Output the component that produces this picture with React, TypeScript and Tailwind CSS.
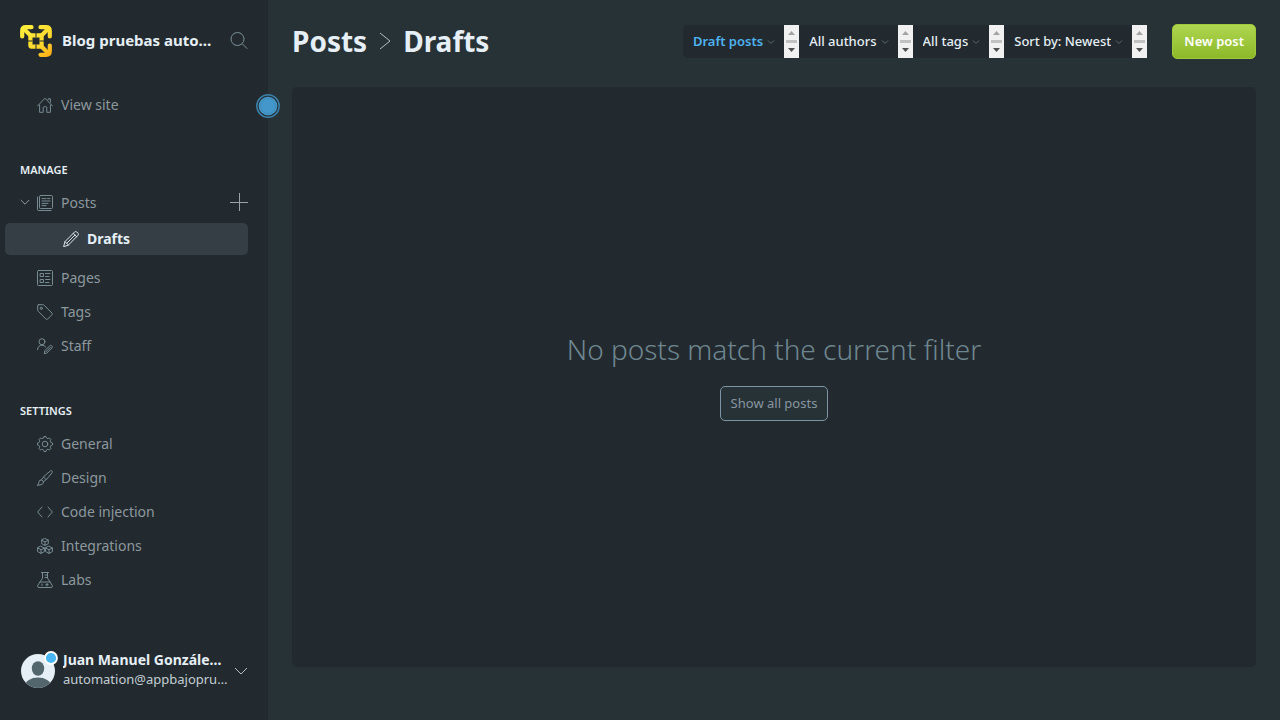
import type { ReactNode } from 'react';

const icons: Record<string, ReactNode> = {
  home: (
    <path d="M.5 9 8 1.2 15.5 9M2.6 8v7.3h3.6v-4.6q0-1 1-1h1.6q1 0 1 1v4.6h3.6V8M11.2 2.6V1.8h2.2v3.4" />
  ),
  posts: (
    <>
      <rect x="2.5" y=".5" width="13" height="13" rx="1" />
      <path d="M.5 2v12.5q0 1 1 1H14M5 3.6h4M10.5 3.6H13M5 6h8M5 8.4h6M5 10.6h4" />
    </>
  ),
  pencil: (
    <path d="M.7 15.3 2 10.6 11.7.9q1-.8 2 0l1.4 1.4q.8 1 0 2L5.4 14ZM2 10.6 5.4 14M10.2 2.4l3.4 3.4M3.8 12.2 12 4" />
  ),
  pages: (
    <>
      <rect x=".5" y=".5" width="15" height="15" rx="1" />
      <path d="M3.5 3.5h3v3h-3ZM3.5 9.5h3v3h-3ZM8.5 3.5H13M8.5 6.5H12M8.5 9.5H13M8.5 12.5H12" />
    </>
  ),
  tag: (
    <>
      <path d="M1.5.7h4.3q.8 0 1.4.6l7.8 7.8q.8.8 0 1.6l-4.4 4.4q-.8.8-1.6 0L1.3 7.4Q.7 6.8.7 6V1.5q0-.8.8-.8Z" />
      <circle cx="4.3" cy="4.3" r="1.1" />
    </>
  ),
  staff: (
    <>
      <circle cx="5" cy="3.7" r="3" />
      <path d="M.5 11.7Q1 7.2 5 7.2q2.3 0 3.6 1.7M7.3 15.4l.6-2.8 5-5q.8-.6 1.6 0l.6.6q.6.8 0 1.6l-5 5ZM9 13.8l4.5-4.5" />
    </>
  ),
  gear: (
    <>
      <circle cx="8" cy="8" r="2.8" />
      <path d="m6.6 1.7.4-1.200h2l.4 1.200q.5 1.300 1.800.8l1.200-.5 1.500 1.500-.6 1.200q-.5 1.300.8 1.800l1.400.5v2l-1.400.5q-1.300.5-.8 1.800l.6 1.200-1.500 1.500-1.200-.6q-1.300-.5-1.800.8L9 15.500H7l-.5-1.300q-.5-1.300-1.800-.8l-1.200.6L2 12.500l.6-1.200Q3.100 10 1.800 9.500L.5 9V7l1.300-.5q1.300-.5.8-1.800L2 3.500 3.500 2l1.200.5q1.400.5 1.900-.8Z" />
    </>
  ),
  brush: (
    <path d="M.7 15.2Q1.7 14 1.8 12.4 2 10 4.2 9.9q2.2.3 2.2 2.4-.1 2.8-5.7 2.9ZM4.2 9.9Q8 4.5 13.5.9q1-.6 1.6.1.7.7 0 1.7Q11.500 8 6.400 12.100M6.500 7l2.700 2.700" />
  ),
  code: <path d="M5 3 .6 8 5 13M11 3l4.400 5L11 13" />,
  cubes: (
    <path d="m8 .5 3.300 1.700v3.500L8 7.400 4.700 5.700V2.200ZM4.700 2.200 8 3.900l3.300-1.700M8 3.900v3.500M4 8.300l3.400 1.700v3.600L4 15.400.6 13.600V10ZM.6 10 4 11.700 7.400 10M4 11.700v3.700M12 8.300l3.400 1.700v3.600L12 15.400l-3.400-1.800V10ZM8.600 10l3.400 1.700 3.400-1.700M12 11.700v3.700" />
  ),
  flask: (
    <path d="M4.500.5h7M5.500.5v5.700L.8 13.300q-.8 2.200 1.200 2.200h12q2 0 1.200-2.200l-4.700-7.100V.5M3 10h10M8 3h2.500M8 5.500h2.500M5 12v1.500M10 11.500v2.400M8.800 12.700h2.400" />
  ),
};

function Icon({ name, className = 'text-[#7c9099]' }: { name: string; className?: string }) {
  return (
    <svg
      viewBox="0 0 16 16"
      className={`mt-[2px] size-4 shrink-0 ${className}`}
      fill="none"
      stroke="currentColor"
      strokeWidth="0.95"
      strokeLinejoin="round"
      strokeLinecap="round"
      aria-hidden="true"
    >
      {icons[name]}
    </svg>
  );
}

function NavItem({ icon, label }: { icon: string; label: string }) {
  return (
    <a href="#" className="flex h-[34px] items-center gap-2 pl-[37px] text-[14px] text-[#8d989e]">
      <Icon name={icon} />
      {label}
    </a>
  );
}

function SectionTitle({ children }: { children: ReactNode }) {
  return (
    <h2 className="mt-[39px] mb-[5px] h-5 pl-5 text-[11px] leading-5 font-semibold text-[#e5eff5]">
      {children}
    </h2>
  );
}

function Logo() {
  return (
    <svg viewBox="0 0 32 32" className="size-8 shrink-0" fill="none" aria-hidden="true">
      <defs>
        <linearGradient id="gold" x1="4" y1="2" x2="30" y2="31" gradientUnits="userSpaceOnUse">
          <stop stopColor="#ffee3a" />
          <stop offset="0.6" stopColor="#fbd92f" />
          <stop offset="1" stopColor="#ffae16" />
        </linearGradient>
      </defs>
      <g stroke="url(#gold)" strokeWidth="4.200" strokeLinecap="round" strokeLinejoin="round">
        <path d="M2.200 11.500V6q0-3.800 3.800-3.800h5.500M20.500 2.200H26q3.800 0 3.800 3.800v5.500M29.800 20.500V26q0 3.800-3.800 3.800h-5.500" />
        <path d="m4.500 4.500 6 6M27.500 4.500l-6 6M27.500 27.500l-6-6" />
        <rect x="10.400" y="10.400" width="11.200" height="11.200" rx="1" />
      </g>
      <path d="M16 7.500v5M16 19.500v5M7.500 16h5M19.500 16h5" stroke="#222a2f" strokeWidth="1" />
    </svg>
  );
}

function ScrollStub() {
  return (
    <svg width="15" height="33" viewBox="0 0 15 33" className="shrink-0" aria-hidden="true">
      <path fill="#f1f1f1" d="M0 0h15v33H0z" />
      <path fill="#a3a3a3" d="M4 10h7L7.500 6z" />
      <path fill="#c1c1c1" d="M2 15h11v3H2z" />
      <path fill="#505050" d="M4 23h7l-3.500 4z" />
    </svg>
  );
}

function Filter({ label, options, active }: { label: string; options: string[]; active?: boolean }) {
  return (
    <div className="flex h-[33px] bg-[#222a2f] first:rounded-l-[5px]">
      <label className="flex items-center gap-1 pr-[9px] pl-[10px]">
        <select
          aria-label={label}
          className={`h-[33px] appearance-none bg-transparent text-[13px] [field-sizing:content] ${
            active ? 'font-semibold text-[#4fb3f0]' : 'font-medium text-[#e5eff5]'
          }`}
        >
          {options.map((option) => (
            <option key={option}>{option}</option>
          ))}
        </select>
        <svg viewBox="0 0 8 8" className="size-2 shrink-0" fill="none" stroke="#5b6a71" aria-hidden="true">
          <path d="m1 2.500 3 3 3-3" />
        </svg>
      </label>
      <ScrollStub />
    </div>
  );
}

export default function App() {
  return (
    <div className="flex min-h-screen bg-[#273237] font-['Noto_Sans','Open_Sans',sans-serif]">
      <aside className="relative flex w-[268px] shrink-0 flex-col bg-[#222a2f] pt-6 pb-8">
        <div className="flex h-[33px] items-center pr-5 pl-5">
          <Logo />
          <div className="ml-[10px] w-[152px] truncate text-[15px] font-bold text-[#e5eff5]">
            Blog pruebas automation
          </div>
          <button type="button" aria-label="Search" className="ml-auto">
            <svg viewBox="0 0 18 18" className="size-[18px]" fill="none" stroke="#7c9099" aria-hidden="true">
              <circle cx="7.500" cy="7" r="6.500" />
              <path d="m12.200 11.700 5 5" />
            </svg>
          </button>
        </div>

        <nav className="mt-[30px]" aria-label="Main">
          <NavItem icon="home" label="View site" />
          <SectionTitle>MANAGE</SectionTitle>
          <div className="flex h-[34px] items-center pr-5 pl-5 text-[14px] text-[#8d989e]">
            <button type="button" aria-label="Collapse posts" className="mr-[7px]">
              <svg viewBox="0 0 10 10" className="size-[10px]" fill="none" stroke="#8d9ba2" aria-hidden="true">
                <path d="m.8 3 4.200 4.200L9.200 3" />
              </svg>
            </button>
            <a href="#" className="flex items-center gap-2">
              <Icon name="posts" />
              Posts
            </a>
            <a href="#" aria-label="New post" className="ml-auto">
              <svg viewBox="0 0 18 18" className="size-[18px]" stroke="#9ba3a7" strokeWidth="1" aria-hidden="true">
                <path d="M9.500 0v18M0 9.500h18" />
              </svg>
            </a>
          </div>
          <a
            href="#"
            className="mt-1 mr-5 mb-[5px] ml-[5px] flex h-8 items-center gap-2 rounded-[5px] bg-[#343e44] pb-[2px] pl-[58px] text-[14px] font-bold text-[#e5eff5]"
          >
            <Icon name="pencil" className="text-[#e5eff5]" />
            Drafts
          </a>
          <NavItem icon="pages" label="Pages" />
          <NavItem icon="tag" label="Tags" />
          <NavItem icon="staff" label="Staff" />
          <SectionTitle>SETTINGS</SectionTitle>
          <NavItem icon="gear" label="General" />
          <NavItem icon="brush" label="Design" />
          <NavItem icon="code" label="Code injection" />
          <NavItem icon="cubes" label="Integrations" />
          <NavItem icon="flask" label="Labs" />
        </nav>

        <button type="button" className="mt-auto flex items-end pr-5 pl-5 text-left">
          <svg viewBox="0 0 39 39" className="size-[39px] shrink-0" aria-hidden="true">
            <defs>
              <clipPath id="face">
                <circle cx="18" cy="22" r="17" />
              </clipPath>
            </defs>
            <circle cx="18" cy="22" r="17" fill="#e5eff5" />
            <g clipPath="url(#face)" fill="#54666d">
              <ellipse cx="18" cy="19.500" rx="6.200" ry="7.300" />
              <ellipse cx="18" cy="37" rx="13" ry="8.500" />
            </g>
            <circle cx="31" cy="9" r="6" fill="#4ab5f3" stroke="#fff" strokeWidth="1.800" />
          </svg>
          <span className="-mb-px ml-1 block w-[168px] shrink-0">
            <span className="block max-w-[162px] truncate text-[14px] leading-5 font-bold text-[#e5eff5]">
              Juan Manuel González Garzón
            </span>
            <span className="block truncate text-[13px] leading-[19px] text-[#c3ced4]">
              automation@appbajopruebas.com
            </span>
          </span>
          <svg viewBox="0 0 14 14" className="mb-[10px] ml-auto size-[14px] shrink-0" fill="none" stroke="#b3bdc2" aria-hidden="true">
            <path d="m1 4 6 6 6-6" />
          </svg>
        </button>

        <button type="button" aria-label="Collapse sidebar" className="absolute top-[94px] -right-3 size-6">
          <svg viewBox="0 0 24 24" className="size-6" aria-hidden="true">
            <circle cx="12" cy="12" r="11.200" fill="#25333b" stroke="#3b7fa8" strokeWidth="1.500" />
            <circle cx="12" cy="12" r="9.300" fill="#4497ca" />
            <circle cx="12" cy="12" r="7.500" fill="none" stroke="#3d87b5" strokeWidth=".7" />
          </svg>
        </button>
      </aside>

      <main className="flex min-w-0 flex-1 flex-col px-6 pt-6 pb-[53px]">
        <header className="flex h-[35px] items-center justify-between">
          <h1 className="flex items-center pb-[2px] text-[28px] leading-8 font-bold text-[#e5eff5]">
            <a href="#">Posts</a>
            <svg viewBox="0 0 12 18" className="mx-3 h-[18px] w-3" fill="none" stroke="#b3bdc2" aria-hidden="true">
              <path d="m1 1 10 8-10 8" />
            </svg>
            Drafts
          </h1>
          <div className="flex items-center gap-[25px]">
            <div className="flex">
              <Filter label="Post type" options={['Draft posts', 'All posts', 'Published posts']} active />
              <Filter label="Author" options={['All authors']} />
              <Filter label="Tag" options={['All tags']} />
              <Filter label="Order" options={['Sort by: Newest', 'Sort by: Oldest']} />
            </div>
            <a
              href="#"
              className="flex h-[35px] items-center rounded-[5px] border border-[#9fcb3a] bg-linear-to-b from-[#aed64f] to-[#8db928] px-[11px] text-[13px] font-semibold text-white"
            >
              New post
            </a>
          </div>
        </header>

        <section className="mt-7 flex flex-1 flex-col items-center justify-center rounded-[5px] bg-[#222a2f]">
          <h2 className="text-[28px] leading-8 font-light text-[#6f868f]">No posts match the current filter</h2>
          <a
            href="#"
            className="mt-[21px] flex h-[35px] items-center rounded-[5px] border border-[#7c94a3] bg-[#273237] px-[10px] text-[13px] text-[#8796a0]"
          >
            Show all posts
          </a>
        </section>
      </main>
    </div>
  );
}
